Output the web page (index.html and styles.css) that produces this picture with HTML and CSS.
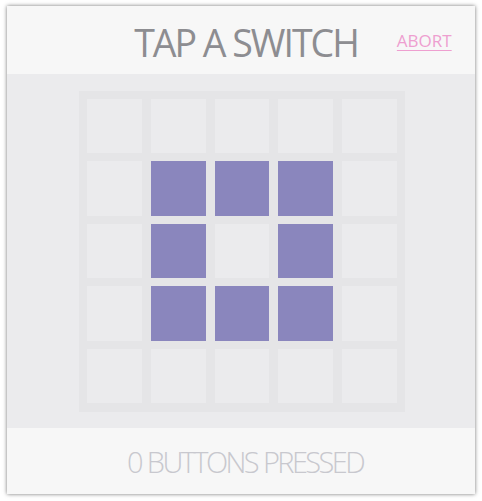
FILE: index.html
```html
<!DOCTYPE html>
<html>
<head>
<meta charset="utf-8">
<link rel="stylesheet" href="styles.css">
</head>
<body>
<div class="card">
  <div class="header">
    <div class="title">TAP A SWITCH</div>
    <a class="abort" href="#">ABORT</a>
  </div>
  <div class="stage">
    <div class="grid">
      <div class="cell"></div><div class="cell"></div><div class="cell"></div><div class="cell"></div><div class="cell"></div>
      <div class="cell"></div><div class="cell on"></div><div class="cell on"></div><div class="cell on"></div><div class="cell"></div>
      <div class="cell"></div><div class="cell on"></div><div class="cell"></div><div class="cell on"></div><div class="cell"></div>
      <div class="cell"></div><div class="cell on"></div><div class="cell on"></div><div class="cell on"></div><div class="cell"></div>
      <div class="cell"></div><div class="cell"></div><div class="cell"></div><div class="cell"></div><div class="cell"></div>
    </div>
  </div>
  <div class="footer">0 BUTTONS PRESSED</div>
</div>
</body>
</html>
```
FILE: styles.css
```css
html, body {
  margin: 0;
  padding: 0;
  background: #ffffff;
}
body {
  padding: 6px 7px 7px 7px;
  font-family: "Open Sans", "DejaVu Sans", sans-serif;
}
.card {
  width: 468px;
  height: 488px;
  background: #f7f7f7;
  box-shadow: 0 0 4px rgba(0, 0, 0, 0.55);
  display: flex;
  flex-direction: column;
}
.header {
  height: 68px;
  display: grid;
  grid-template-columns: 1fr auto 1fr;
  align-items: center;
}
.title {
  grid-column: 2;
  padding-left: 10px;
  font-size: 37.5px;
  font-weight: 400;
  letter-spacing: -2px;
  color: #8d8d91;
  line-height: 1;
  padding-top: 5px;
}
.abort {
  grid-column: 3;
  justify-self: start;
  margin-left: 39px;
  font-size: 17px;
  color: #ee9fd0;
  text-decoration: underline;
  text-underline-offset: 3px;
}
.stage {
  height: 354px;
  background: #ebebed;
  display: flex;
  align-items: center;
  justify-content: center;
}
.grid {
  width: 310px;
  height: 305px;
  padding: 8px;
  background: #e5e5e7;
  display: grid;
  grid-template-columns: repeat(5, 1fr);
  grid-template-rows: repeat(5, 1fr);
  column-gap: 9px;
  row-gap: 8px;
  margin-left: 2px;
}
.cell {
  background: #ebebed;
}
.cell.on {
  background: #8a86bd;
}
.footer {
  flex: 1;
  display: flex;
  align-items: center;
  justify-content: center;
  padding-left: 8px;
  font-size: 29px;
  font-weight: 300;
  letter-spacing: -2.6px;
  word-spacing: 1px;
  color: #c8c8ce;
}
```
